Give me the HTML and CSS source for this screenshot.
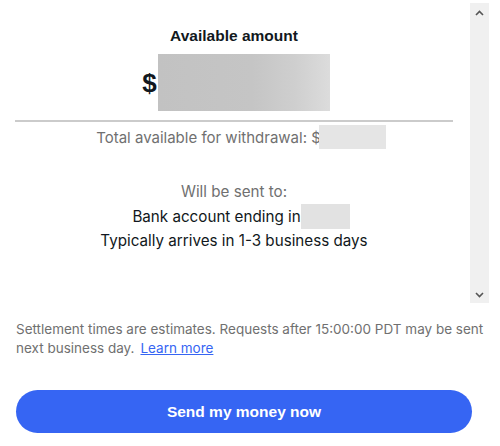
FILE: index.html
```html
<!DOCTYPE html>
<html>
<head>
<meta charset="utf-8">
<link rel="stylesheet" href="styles.css">
</head>
<body>
<div class="page">
  <div class="top">
    <div class="content">
      <h2 class="title">Available amount</h2>
      <div class="amount-row">
        <span class="dollar">$</span>
        <span class="mask mask-big"></span>
      </div>
      <div class="rule"></div>
      <div class="total-row">
        <span class="muted">Total available for withdrawal: $</span><span class="mask mask-total"></span>
      </div>
      <div class="sent">
        <div class="muted">Will be sent to:</div>
        <div class="bank-row"><span>Bank account ending in</span><span class="mask mask-bank"></span></div>
        <div>Typically arrives in 1-3 business days</div>
      </div>
    </div>
    <div class="scrollbar">
      <svg class="arrow" width="9" height="6" viewBox="0 0 9 6"><path d="M1 5 L4.5 1.5 L8 5" fill="none" stroke="#555" stroke-width="1.6"/></svg>
      <svg class="arrow" width="9" height="6" viewBox="0 0 9 6"><path d="M1 1 L4.5 4.5 L8 1" fill="none" stroke="#555" stroke-width="1.6"/></svg>
    </div>
  </div>
  <div class="note">
    <div class="note-line">Settlement times are estimates. Requests after 15:00:00 PDT may be sent</div>
    <div class="note-line"><span>next business day.</span><a href="#" class="link">Learn more</a></div>
  </div>
  <button class="cta">Send my money now</button>
</div>
</body>
</html>
```
FILE: styles.css
```css
html, body {
  margin: 0;
  padding: 0;
  background: #fff;
}
.page {
  width: 500px;
  height: 446px;
  font-family: "Inter", "Liberation Sans", sans-serif;
  color: #111820;
}
.top {
  display: flex;
  padding-top: 3px;
  height: 300px;
}
.content {
  width: 438px;
  padding: 0 17px 0 15px;
  text-align: center;
  font-size: 15px;
}
.title {
  margin: 23px 0 0;
  font-family: "Liberation Sans", sans-serif;
  font-weight: bold;
  font-size: 15.5px;
  line-height: 20px;
  color: #111820;
}
.amount-row {
  display: flex;
  justify-content: center;
  align-items: center;
  margin-top: 8px;
  padding-left: 4px;
}
.dollar {
  font-family: "Liberation Sans", sans-serif;
  font-weight: bold;
  font-size: 26px;
  line-height: 30px;
  margin-right: 1px;
}
.mask {
  display: inline-block;
  vertical-align: top;
}
.mask-big {
  width: 172px;
  height: 57px;
  background: linear-gradient(to right, #c2c2c2 0%, #c5c5c5 55%, #cfcfcf 80%, #dcdcdc 100%);
}
.rule {
  height: 2px;
  background: #cbcbcb;
  margin-top: 9px;
}
.total-row {
  display: flex;
  justify-content: center;
  align-items: center;
  margin-top: 3px;
  height: 24px;
  padding-left: 14px;
}
.muted {
  color: #707070;
}
.mask-total {
  width: 67px;
  height: 24px;
  background: #e5e5e5;
  margin-left: -2px;
}
.sent {
  margin-top: 31px;
  line-height: 24px;
  font-size: 15.2px;
}
.bank-row {
  display: flex;
  justify-content: center;
  align-items: center;
  height: 25px;
  padding-left: 14px;
}
.mask-bank {
  width: 49px;
  height: 25px;
  background: #e2e2e2;
}
.scrollbar {
  width: 19px;
  height: 300px;
  background: #f0f0f0;
  display: flex;
  flex-direction: column;
  justify-content: space-between;
  align-items: center;
  padding: 7px 0 5px;
  box-sizing: border-box;
}
.arrow {
  display: block;
}
.note {
  margin: 17px 16px 0 16px;
  font-size: 13.5px;
  line-height: 19px;
  color: #707070;
}
.note-line {
  white-space: nowrap;
}
.link {
  color: #3665f3;
  text-decoration: underline;
  margin-left: 6px;
}
.cta {
  display: block;
  margin: 32px 0 0 16px;
  width: 456px;
  height: 43px;
  border: none;
  border-radius: 22px;
  background: #3665f3;
  color: #fff;
  font-family: "Liberation Sans", sans-serif;
  font-weight: bold;
  font-size: 15.5px;
}
```
